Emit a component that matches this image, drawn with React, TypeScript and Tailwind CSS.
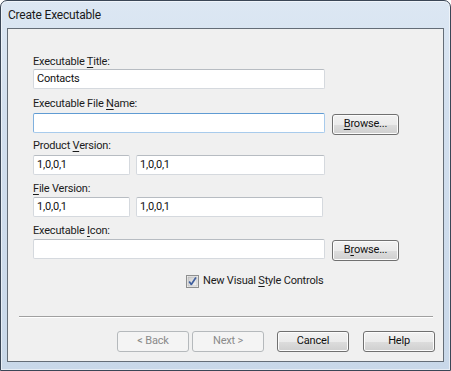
import React from 'react';

const Label = ({ children, className = '' }: { children: React.ReactNode; className?: string }) => (
  <div className={`h-[15px] leading-[15px] text-[#1b1b1b] ${className}`}>{children}</div>
);

const U = ({ children }: { children: React.ReactNode }) => <span className="underline underline-offset-[2px]">{children}</span>;

const TextBox = ({ value = '', width, focused = false }: { value?: string; width: string; focused?: boolean }) => (
  <div
    className={`${width} h-[20px] flex items-center pl-[3px] rounded-[2px] bg-white border text-[#111] ${
      focused ? 'border-[#a8cbec] border-t-[#5f9bd3] border-l-[#7fb0de]' : 'border-[#d5d9de] border-t-[#b7bcc2]'
    }`}
  >
    {value}
  </div>
);

const Button = ({
  children,
  disabled = false,
  width = 'w-[72px]',
  className = '',
}: {
  children: React.ReactNode;
  disabled?: boolean;
  width?: string;
  className?: string;
}) => (
  <div
    className={`h-[21px] ${width} flex items-center justify-center rounded-[3px] border ${
      disabled
        ? 'border-[#b5b9bc] bg-[#f4f4f4] text-[#8a8a8a]'
        : 'border-[#707070] bg-[linear-gradient(#f2f2f2_0%,#ebebeb_50%,#dddddd_51%,#cfcfcf_100%)] text-[#111] shadow-[inset_0_0_0_1px_#fcfcfc]'
    } ${className}`}
  >
    {children}
  </div>
);

const Checkbox = () => (
  <svg width="13" height="13" viewBox="0 0 13 13">
    <defs>
      <linearGradient id="cb" x1="0" y1="0" x2="1" y2="1">
        <stop offset="0" stopColor="#cbcbcb" />
        <stop offset="1" stopColor="#f6f6f6" />
      </linearGradient>
    </defs>
    <rect x="0.5" y="0.5" width="12" height="12" fill="#f4f4f4" stroke="#8e8f8f" />
    <rect x="2" y="2" width="9" height="9" fill="url(#cb)" stroke="#b0b0b0" strokeWidth="0.6" />
    <path d="M3.2 6.4 L5.3 9.4 L9.9 2.6" fill="none" stroke="#3f5f9e" strokeWidth="1.7" strokeLinejoin="round" />
  </svg>
);

export default function App() {
  return (
    <div className="w-[451px] h-[371px] flex flex-col rounded-t-[7px] border border-[#3a4656] bg-[linear-gradient(180deg,#dce7f3_0%,#d2dfee_30%,#c9d8e9_100%)] shadow-[inset_0_0_0_1px_rgba(255,255,255,0.55)] font-['Roboto',Arial,sans-serif] text-[11px] tracking-[-0.2px] overflow-hidden">
      {/* Title bar */}
      <div className="h-[27px] flex items-center pl-[7px] pt-[1px] text-[12px] text-[#1a1a1a]">Create Executable</div>

      <div className="flex-1 flex px-[6px] pb-[8px]">
        <div className="flex-1 flex flex-col border border-[#646d77] bg-[#f0f0f0]">
          {/* Form */}
          <div className="flex flex-col pl-[25px] pt-[25px]">
            <Label>
              Executable <U>T</U>itle:
            </Label>
            <TextBox width="w-[292px]" value="Contacts" />

            <Label className="mt-[7px]">
              Executable File <U>N</U>ame:
            </Label>
            <div className="flex items-start mt-[2px]">
              <TextBox width="w-[292px]" focused />
              <Button width="w-[67px]" className="ml-[7px] mt-[1px]">
                <U>B</U>rowse...
              </Button>
            </div>

            <Label className="mt-[3px]">
              Product <U>V</U>ersion:
            </Label>
            <div className="flex mt-[2px] gap-[6px]">
              <TextBox width="w-[97px]" value="1,0,0,1" />
              <TextBox width="w-[189px]" value="1,0,0,1" />
            </div>

            <Label className="mt-[6px]">
              <U>F</U>ile Version:
            </Label>
            <div className="flex mt-[1px] gap-[6px]">
              <TextBox width="w-[97px]" value="1,0,0,1" />
              <TextBox width="w-[187px]" value="1,0,0,1" />
            </div>

            <Label className="mt-[6px]">
              Executable <U>I</U>con:
            </Label>
            <div className="flex items-start mt-[1px]">
              <TextBox width="w-[292px]" />
              <Button width="w-[67px]" className="ml-[7px] mt-[1px]">
                B<U>r</U>owse...
              </Button>
            </div>

            <div className="flex items-center mt-[14px] ml-[153px] h-[13px]">
              <Checkbox />
              <span className="ml-[4px] text-[#1b1b1b]">
                New Visual <U>S</U>tyle Controls
              </span>
            </div>
          </div>

          {/* Separator */}
          <div className="mt-[28px] ml-[11px] mr-[10px] h-[2px] border-t border-[#a0a0a0] border-b border-b-white" />

          {/* Buttons */}
          <div className="flex justify-end pr-[8px] mt-[13px]">
            <Button disabled>&lt; Back</Button>
            <Button disabled className="ml-[3px]">
              Next &gt;
            </Button>
            <Button className="ml-[13px]">Cancel</Button>
            <Button className="ml-[14px]">Help</Button>
          </div>
        </div>
      </div>
    </div>
  );
}
